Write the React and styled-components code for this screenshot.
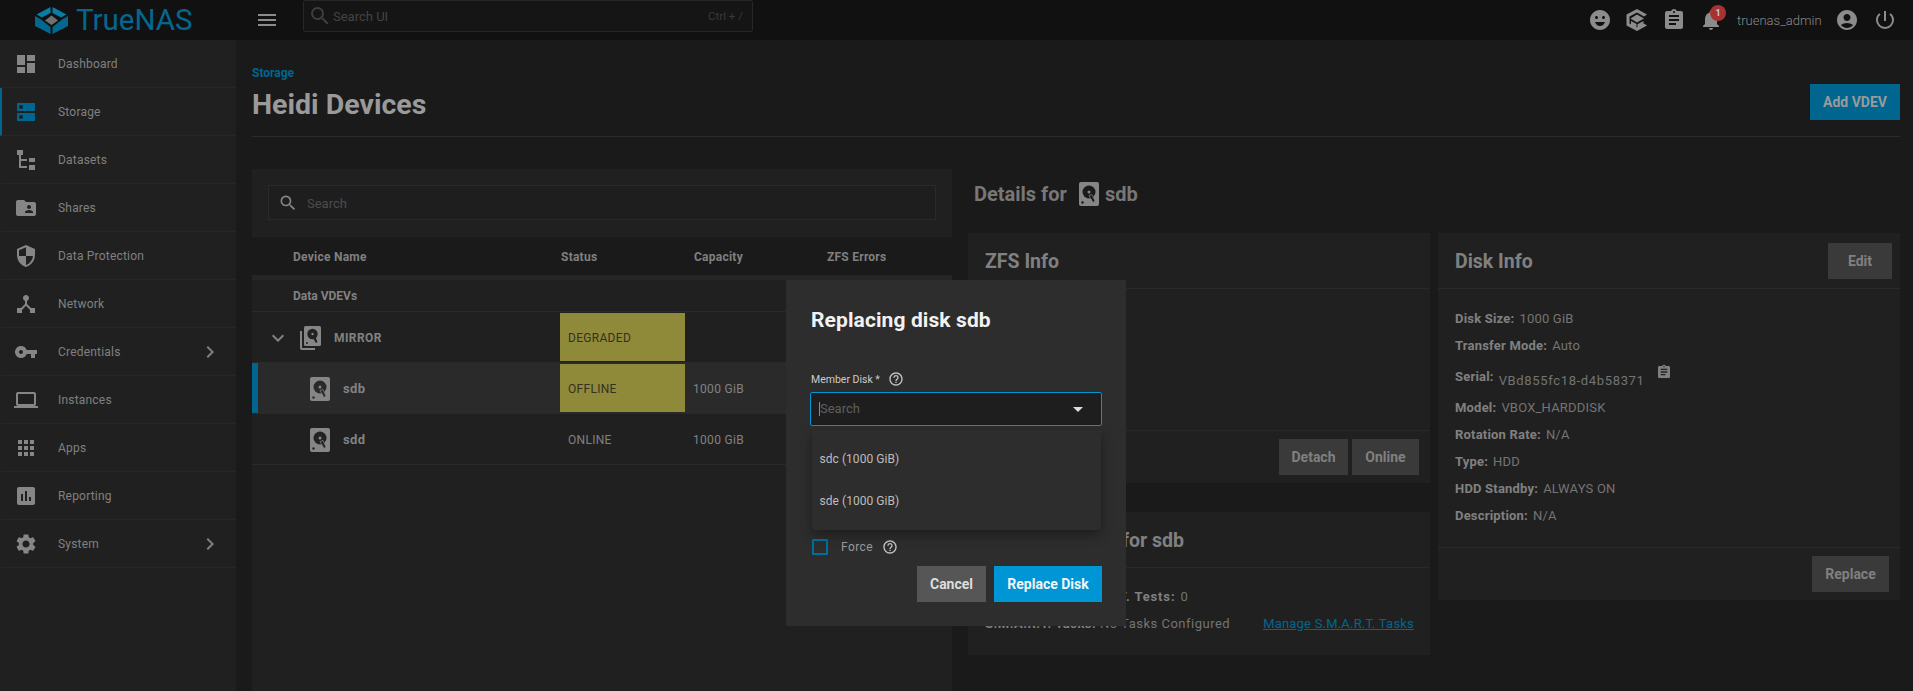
import React from 'react';
import styled, { createGlobalStyle } from 'styled-components';
import {
  MdDashboard, MdDns, MdFolderShared, MdSecurity, MdDeviceHub, MdVpnKey, MdLaptop, MdApps,
  MdAssessment, MdSettings, MdChevronRight, MdExpandMore, MdMenu, MdSearch, MdEmojiEmotions,
  MdAssignment, MdNotifications, MdAccountCircle, MdPowerSettingsNew, MdHelpOutline, MdArrowDropDown,
} from 'react-icons/md';

const GlobalStyle = createGlobalStyle`
  html, body {
    margin: 0;
    height: 100%;
    overflow: hidden;
    background: #1a1a1a;
  }
  * {
    box-sizing: border-box;
  }
`;

const titleFont = '"Roboto", "Liberation Sans", sans-serif';
const textFont = '"Roboto", "Liberation Sans", sans-serif';

const Page = styled.div`
  height: 100vh;
  display: flex;
  flex-direction: column;
  font-family: ${textFont};
  font-size: 12px;
  color: #828282;
`;

/* top bar */
const TopBar = styled.header`
  height: 40px;
  flex: none;
  background: #111111;
  display: flex;
  align-items: center;
  padding-right: 16px;
`;

const Brand = styled.div`
  width: 255px;
  padding-left: 35px;
  display: flex;
  align-items: center;
  gap: 8px;
`;

const BrandName = styled.span`
  font-family: ${titleFont};
  font-size: 29.5px;
  line-height: 32px;
  color: #03688f;
`;

const MenuButton = styled.div`
  width: 24px;
  height: 24px;
  color: #8c8c8c;
  font-size: 24px;
  line-height: 0;
`;

const GlobalSearch = styled.div`
  margin-left: 24px;
  align-self: flex-start;
  width: 450px;
  height: 32px;
  border: 1px solid #262626;
  border-radius: 2px;
  background: #151515;
  display: flex;
  align-items: center;
  padding: 0 9px 0 4px;
  color: #444;
  font-size: 13px;
  gap: 1px;
`;

const Shortcut = styled.span`
  margin-left: auto;
  font-size: 11.5px;
  color: #3a3a3a;
`;

const TopActions = styled.div`
  margin-left: auto;
  display: flex;
  align-items: center;
  color: #8c8c8c;
  font-size: 24px;
`;

const TopIcon = styled.div`
  position: relative;
  width: 24px;
  height: 24px;
  line-height: 0;
  margin-left: ${p => p.$gap}px;
`;

const Badge = styled.span`
  position: absolute;
  top: -3px;
  right: -3px;
  width: 16px;
  height: 16px;
  border-radius: 50%;
  background: #a83232;
  color: #ccc;
  font-size: 9px;
  font-weight: 700;
  line-height: 16px;
  text-align: center;
`;

const UserName = styled.span`
  margin-left: 14px;
  font-size: 13px;
  font-weight: 300;
  color: #8a8a8a;
  width: 90px;
  white-space: nowrap;
`;

const Body = styled.div`
  flex: 1;
  min-height: 0;
  display: flex;
`;

/* sidebar */
const Sidebar = styled.nav`
  width: 236px;
  flex: none;
  background: #202020;
`;

const NavRow = styled.div`
  height: 48px;
  display: flex;
  align-items: center;
  gap: 20px;
  padding: 0 14px 0 12px;
  border-left: 2px solid ${p => (p.$active ? '#006690' : 'transparent')};
  border-bottom: 1px solid #272727;
  color: #808080;
  font-size: 12px;
  letter-spacing: 0.2px;
`;

const NavIcon = styled.span`
  width: 24px;
  height: 24px;
  font-size: 24px;
  line-height: 0;
  color: ${p => (p.$active ? '#006690' : '#868686')};
`;

const NavArrow = styled.span`
  margin-left: auto;
  font-size: 24px;
  height: 24px;
  line-height: 0;
`;

/* main */
const Main = styled.main`
  flex: 1;
  min-width: 0;
  padding: 0 13px 0 16px;
  display: flex;
  flex-direction: column;
`;

const PageHead = styled.div`
  height: 97px;
  flex: none;
  border-bottom: 1px solid #2a2a2a;
  display: flex;
  justify-content: space-between;
  padding-top: 26px;
`;

const Crumb = styled.div`
  font-size: 12px;
  line-height: 14px;
  font-weight: 700;
  color: #006690;
`;

const PageTitle = styled.h1`
  margin: 7px 0 0;
  font-family: ${titleFont};
  font-size: 28.5px;
  line-height: 36px;
  font-weight: 700;
  color: #9a9a9a;
`;

const Button = styled.div`
  height: 36px;
  width: ${p => (p.$width ? `${p.$width}px` : 'auto')};
  padding: 0 ${p => (p.$width ? 0 : 14)}px;
  display: flex;
  align-items: center;
  justify-content: center;
  font-size: 14px;
  font-weight: 700;
  white-space: nowrap;
  background: ${p => p.$bg || '#3a3a3a'};
  color: ${p => p.$color || '#808080'};
`;

const AddButton = styled(Button)`
  margin-top: 18px;
`;

const Columns = styled.div`
  flex: 1;
  min-height: 0;
  margin-top: 32px;
  display: flex;
  gap: 16px;
`;

/* device table */
const TreeCard = styled.section`
  width: 700px;
  flex: none;
  background: #202020;
`;

const TreeSearchWrap = styled.div`
  height: 68px;
  padding: 16px;
`;

const TreeSearch = styled.div`
  height: 35px;
  border: 1px solid #2a2a2a;
  background: #1e1e1e;
  display: flex;
  align-items: center;
  padding: 1px 0 0 9px;
  gap: 9px;
  font-size: 13px;
  color: #4c4c4c;
`;

const SearchGlyph = styled.span`
  font-size: 20px;
  height: 20px;
  line-height: 0;
  color: #868686;
`;

const HeadRow = styled.div`
  height: 43px;
  padding-top: 1px;
  display: grid;
  grid-template-columns: 309px 133px 133px 1fr;
  align-items: center;
  background: #1a1a1a;
  border-bottom: 5px solid #262626;
  font-weight: 700;
  font-size: 12px;
  letter-spacing: 0.25px;
  color: #808080;
`;

const HeadCell = styled.div`
  padding-left: ${p => p.$pad || 0}px;
`;

const GroupRow = styled.div`
  height: 32px;
  padding-left: 41px;
  display: flex;
  align-items: center;
  font-weight: 700;
  border-bottom: 1px solid #292929;
`;

const DeviceRow = styled.div`
  height: 51px;
  display: grid;
  grid-template-columns: 308px 125px 133px 1fr;
  border-bottom: 1px solid #292929;
  background: ${p => (p.$selected ? '#2a2a2a' : 'transparent')};
  box-shadow: ${p => (p.$selected ? 'inset 6px 0 0 #006690' : 'none')};
`;

const NameCell = styled.div`
  display: flex;
  align-items: center;
  padding: 1px 0 0 ${p => p.$pad}px;
  gap: 13px;
  font-weight: 700;
  font-size: ${p => p.$size || 13}px;
  letter-spacing: 0.4px;
`;

const Chevron = styled.span`
  font-size: 24px;
  height: 24px;
  line-height: 0;
  margin-right: -3px;
`;

const StatusCell = styled.div`
  margin: 1px 0;
  padding: 2px 0 0 8px;
  display: flex;
  align-items: center;
  letter-spacing: 0.3px;
  background: ${p => (p.$warn ? '#8f893a' : 'transparent')};
  color: ${p => (p.$warn ? '#33321c' : '#808080')};
`;

const CapacityCell = styled.div`
  padding: 2px 0 0 8px;
  display: flex;
  align-items: center;
  letter-spacing: 0.3px;
`;

/* details */
const DetailColumn = styled.div`
  flex: 1;
  min-width: 0;
`;

const DetailHead = styled.h2`
  height: 64px;
  margin: 0;
  padding: 0 0 14px 6px;
  display: flex;
  align-items: center;
  font-family: ${titleFont};
  font-size: 20px;
  font-weight: 700;
  color: #777;
`;

const DetailDisk = styled.span`
  display: flex;
  margin: 0 6px 0 12px;
`;

const CardGrid = styled.div`
  display: grid;
  grid-template-columns: 462px 462px;
  column-gap: 8px;
  align-items: start;
`;

const CardStack = styled.div`
  display: flex;
  flex-direction: column;
  gap: 29px;
`;

const Card = styled.section`
  background: #202020;
  height: ${p => p.$height}px;
  display: flex;
  flex-direction: column;
`;

const CardHead = styled.div`
  height: 56px;
  flex: none;
  padding: 0 8px 0 17px;
  display: flex;
  align-items: center;
  justify-content: space-between;
  border-bottom: 1px solid #292929;
`;

const CardTitle = styled.h3`
  margin: 1px 0 0;
  font-family: ${titleFont};
  font-size: 19.5px;
  font-weight: 700;
  color: #808080;
`;

const CardBody = styled.div`
  flex: 1;
  padding: ${p => p.$pad || '0 17px'};
`;

const CardFoot = styled.div`
  height: 53px;
  flex: none;
  padding: 0 11px;
  display: flex;
  align-items: center;
  justify-content: flex-end;
  gap: 4px;
  border-top: 1px solid #292929;
`;

const InfoRow = styled.div`
  height: 27px;
  display: flex;
  align-items: center;
  gap: 5px;
  font-size: 13px;
  letter-spacing: ${p => p.$spacing || 0.2}px;
  color: #747474;
`;

const SerialRow = styled(InfoRow)`
  height: 35px;
  align-items: flex-start;
`;

const InfoKey = styled.b`
  color: #808080;
  font-weight: 700;
`;

const SerialValue = styled.span`
  margin-top: 14px;
  letter-spacing: 0.65px;
`;

const SerialKey = styled(InfoKey)`
  margin-top: 10px;
`;

const CopyIcon = styled.span`
  font-size: 16px;
  height: 16px;
  line-height: 0;
  margin: 5px 0 0 6px;
  color: #808080;
`;

const TaskRow = styled(InfoRow)`
  justify-content: space-between;
`;

const TaskLink = styled.a`
  color: #006690;
  text-decoration: underline;
  letter-spacing: 0.2px;
`;

/* dialog */
const Overlay = styled.div`
  position: fixed;
  inset: 0;
  padding-top: 280px;
  display: flex;
  justify-content: center;
  align-items: flex-start;
`;

const Dialog = styled.div`
  width: 340px;
  height: 346px;
  margin-right: 1px;
  padding: 28px 24px 24px;
  background: #2d2d2d;
  color: #ddd;
  display: flex;
  flex-direction: column;
`;

const DialogTitle = styled.h2`
  margin: 0 0 40px 1px;
  font-size: 21px;
  line-height: 24px;
  font-weight: 700;
  letter-spacing: 0.1px;
  color: #f2f2f2;
`;

const FieldLabel = styled.div`
  height: 14px;
  margin-left: 1px;
  display: flex;
  align-items: center;
  gap: 8px;
  font-size: 10.5px;
  color: #ccc;
`;

const HelpIcon = styled(MdHelpOutline)`
  font-size: 16px;
  color: #c4c4c4;
`;

const SelectBox = styled.div`
  position: relative;
  margin-top: 6px;
  height: 34px;
  border: 1px solid #0095d5;
  border-radius: 2px;
  background: #1e1e1e;
  display: flex;
  align-items: center;
  justify-content: space-between;
  padding: 0 11px 0 8px;
  color: #5e5e5e;
  font-size: 13px;
`;

const Caret = styled.span`
  border-left: 1px solid #8a8a8a;
  line-height: 14px;
`;

const DropArrow = styled(MdArrowDropDown)`
  font-size: 24px;
  color: #ddd;
`;

const DropList = styled.div`
  position: absolute;
  top: 37px;
  left: 0;
  right: 0;
  padding: 8px 0;
  margin: 0 0.5px;
  border-radius: 0 0 4px 4px;
  background: #2d2d2d;
  box-shadow: 0 5px 12px rgba(0, 0, 0, 0.35);
`;

const DropItem = styled.div`
  height: 42px;
  padding-left: 8px;
  display: flex;
  align-items: center;
  font-size: 12px;
  letter-spacing: 0.05px;
  color: #bdbdbd;
`;

const CheckRow = styled.div`
  margin: 112px 0 0 2px;
  height: 16px;
  padding-top: 1px;
  display: flex;
  align-items: center;
  font-size: 12px;
  letter-spacing: 0.4px;
  color: #9a9a9a;
`;

const CheckBox = styled.span`
  width: 16px;
  height: 16px;
  margin-right: 13px;
  border: 2px solid #006f9e;
  border-radius: 1px;
`;

const ForceHelp = styled(HelpIcon)`
  margin-left: 9px;
`;

const DialogActions = styled.div`
  margin-top: 12px;
  display: flex;
  justify-content: flex-end;
  gap: 8px;
`;

const navItems = [
  { label: 'Dashboard', icon: <MdDashboard /> },
  { label: 'Storage', icon: <MdDns />, active: true },
  { label: 'Datasets', icon: <DatasetsIcon /> },
  { label: 'Shares', icon: <MdFolderShared /> },
  { label: 'Data Protection', icon: <MdSecurity /> },
  { label: 'Network', icon: <MdDeviceHub /> },
  { label: 'Credentials', icon: <MdVpnKey />, more: true },
  { label: 'Instances', icon: <MdLaptop /> },
  { label: 'Apps', icon: <MdApps /> },
  { label: 'Reporting', icon: <MdAssessment /> },
  { label: 'System', icon: <MdSettings />, more: true },
];

const diskInfo = [
  ['Disk Size:', '1000 GiB'],
  ['Transfer Mode:', 'Auto'],
  ['Serial:', 'VBd855fc18-d4b58371'],
  ['Model:', 'VBOX_HARDDISK'],
  ['Rotation Rate:', 'N/A'],
  ['Type:', 'HDD'],
  ['HDD Standby:', 'ALWAYS ON'],
  ['Description:', 'N/A'],
];

function DatasetsIcon() {
  return (
    <svg width="24" height="24" viewBox="0 0 24 24" fill="currentColor">
      <rect x="3" y="2" width="6" height="5" />
      <rect x="5" y="7" width="2" height="13" />
      <rect x="5" y="11" width="8" height="2" />
      <rect x="5" y="18" width="8" height="2" />
      <rect x="15" y="10" width="6" height="4" />
      <rect x="15" y="17" width="6" height="5" />
    </svg>
  );
}

function LogoMark() {
  return (
    <svg width="33" height="27" viewBox="0 0 33 27">
      <polygon points="15.5,0 15.5,6 7,10.5 1.5,7.5" fill="#0a7da6" />
      <polygon points="17.5,0 17.5,6 26,10.5 31.5,7.5" fill="#0a7da6" />
      <polygon points="0,9 6,12.5 15.5,20 15.5,27 0,19" fill="#03688f" />
      <polygon points="33,9 27,12.5 17.5,20 17.5,27 33,19" fill="#03688f" />
      <polygon points="16.5,8.5 23,13.5 16.5,18 10,13.5" fill="#707070" />
    </svg>
  );
}

function CubeLogo() {
  return (
    <svg width="24" height="24" viewBox="0 0 24 24" fill="currentColor">
      <path d="M12 1 22 6.5 19 8.5 12 4.5 4.5 8.5V15.5L12 19.5 19 15.5 22 17.5 12 23 1.5 17.5V6.5Z" />
      <path d="M12 6.5 19 10.5 12 14.5 5.5 10.5Z" />
      <path d="M6 13 11.5 16V20L6 17ZM18.5 13 12.5 16.3V20L18.5 16.8Z" />
    </svg>
  );
}

function DiskIcon({ ground = '#222' }) {
  return (
    <svg width="20" height="24" viewBox="0 0 20 24" style={{ flex: 'none' }}>
      <rect x="0" y="0" width="20" height="24" rx="2" fill="#868686" />
      <circle cx="10" cy="10" r="6.5" fill={ground} />
      <circle cx="10" cy="10" r="1.5" fill="#868686" />
      <path d="M10 13.5 13 12.5 16 19 14 20.5Z" fill={ground} stroke="#868686" strokeWidth="0.7" />
      <circle cx="3.5" cy="20.5" r="1.2" fill={ground} />
    </svg>
  );
}

function MirrorIcon() {
  return (
    <svg width="21" height="24" viewBox="0 0 21 24" style={{ flex: 'none' }}>
      <path d="M0 5H2V22H15V24H2Q0 24 0 22Z" fill="#868686" />
      <rect x="4" y="0" width="17" height="20" rx="1.5" fill="#868686" />
      <circle cx="12.5" cy="8" r="5.2" fill="#222" />
      <circle cx="12.5" cy="8" r="1.2" fill="#868686" />
      <path d="M12.5 11 15 10 17.5 16 15.8 17Z" fill="#222" />
      <circle cx="7" cy="17" r="1" fill="#222" />
    </svg>
  );
}

export default function App() {
  return (
    <Page>
      <GlobalStyle />
      <TopBar>
        <Brand>
          <LogoMark />
          <BrandName>TrueNAS</BrandName>
        </Brand>
        <MenuButton><MdMenu /></MenuButton>
        <GlobalSearch>
          <MdSearch size={24} color="#3e3e3e" />
          Search UI
          <Shortcut>Ctrl + /</Shortcut>
        </GlobalSearch>
        <TopActions>
          <TopIcon $gap={0}><MdEmojiEmotions /></TopIcon>
          <TopIcon $gap={13}><CubeLogo /></TopIcon>
          <TopIcon $gap={13}><MdAssignment /></TopIcon>
          <TopIcon $gap={13}>
            <MdNotifications />
            <Badge>1</Badge>
          </TopIcon>
          <UserName>truenas_admin</UserName>
          <TopIcon $gap={8}><MdAccountCircle /></TopIcon>
          <TopIcon $gap={14}><MdPowerSettingsNew /></TopIcon>
        </TopActions>
      </TopBar>
      <Body>
        <Sidebar>
          {navItems.map(item => (
            <NavRow key={item.label} $active={item.active}>
              <NavIcon $active={item.active}>{item.icon}</NavIcon>
              {item.label}
              {item.more && <NavArrow><MdChevronRight /></NavArrow>}
            </NavRow>
          ))}
        </Sidebar>
        <Main>
          <PageHead>
            <div>
              <Crumb>Storage</Crumb>
              <PageTitle>Heidi Devices</PageTitle>
            </div>
            <AddButton $width={90} $bg="#006690" $color="#9a9a9a">Add VDEV</AddButton>
          </PageHead>
          <Columns>
            <TreeCard>
              <TreeSearchWrap>
                <TreeSearch>
                  <SearchGlyph><MdSearch /></SearchGlyph>
                  Search
                </TreeSearch>
              </TreeSearchWrap>
              <HeadRow>
                <HeadCell $pad={41}>Device Name</HeadCell>
                <HeadCell>Status</HeadCell>
                <HeadCell>Capacity</HeadCell>
                <HeadCell>ZFS Errors</HeadCell>
              </HeadRow>
              <GroupRow>Data VDEVs</GroupRow>
              <DeviceRow>
                <NameCell $pad={14} $size={12}>
                  <Chevron><MdExpandMore /></Chevron>
                  <MirrorIcon />
                  MIRROR
                </NameCell>
                <StatusCell $warn>DEGRADED</StatusCell>
                <CapacityCell />
              </DeviceRow>
              <DeviceRow $selected>
                <NameCell $pad={58}>
                  <DiskIcon ground="#2a2a2a" />
                  sdb
                </NameCell>
                <StatusCell $warn>OFFLINE</StatusCell>
                <CapacityCell>1000 GiB</CapacityCell>
              </DeviceRow>
              <DeviceRow>
                <NameCell $pad={58}>
                  <DiskIcon />
                  sdd
                </NameCell>
                <StatusCell>ONLINE</StatusCell>
                <CapacityCell>1000 GiB</CapacityCell>
              </DeviceRow>
            </TreeCard>
            <DetailColumn>
              <DetailHead>
                Details for
                <DetailDisk><DiskIcon ground="#1a1a1a" /></DetailDisk>
                sdb
              </DetailHead>
              <CardGrid>
                <CardStack>
                  <Card $height={250}>
                    <CardHead><CardTitle>ZFS Info</CardTitle></CardHead>
                    <CardBody />
                    <CardFoot>
                      <Button $width={69}>Detach</Button>
                      <Button $width={67}>Online</Button>
                    </CardFoot>
                  </Card>
                  <Card $height={143}>
                    <CardHead><CardTitle>S.M.A.R.T. Info for sdb</CardTitle></CardHead>
                    <CardBody $pad="15px 16px 0 17px">
                      <InfoRow $spacing={0.85}><InfoKey>Completed S.M.A.R.T. Tests:</InfoKey> 0</InfoRow>
                      <TaskRow $spacing={0.5}>
                        <span><InfoKey>S.M.A.R.T. Tasks:</InfoKey> No Tasks Configured</span>
                        <TaskLink>Manage S.M.A.R.T. Tasks</TaskLink>
                      </TaskRow>
                    </CardBody>
                  </Card>
                </CardStack>
                <Card $height={367}>
                  <CardHead>
                    <CardTitle>Disk Info</CardTitle>
                    <Button $width={64}>Edit</Button>
                  </CardHead>
                  <CardBody $pad="16px 17px 0">
                    {diskInfo.map(([key, value]) =>
                      key === 'Serial:' ? (
                        <SerialRow key={key}>
                          <SerialKey>{key}</SerialKey>
                          <SerialValue>{value}</SerialValue>
                          <CopyIcon><MdAssignment /></CopyIcon>
                        </SerialRow>
                      ) : (
                        <InfoRow key={key}><InfoKey>{key}</InfoKey> {value}</InfoRow>
                      )
                    )}
                  </CardBody>
                  <CardFoot>
                    <Button $width={77}>Replace</Button>
                  </CardFoot>
                </Card>
              </CardGrid>
            </DetailColumn>
          </Columns>
        </Main>
      </Body>
      <Overlay>
        <Dialog>
          <DialogTitle>Replacing disk sdb</DialogTitle>
          <FieldLabel>
            Member Disk *
            <HelpIcon />
          </FieldLabel>
          <SelectBox>
            <Caret>Search</Caret>
            <DropArrow />
            <DropList>
              <DropItem>sdc (1000 GiB)</DropItem>
              <DropItem>sde (1000 GiB)</DropItem>
            </DropList>
          </SelectBox>
          <CheckRow>
            <CheckBox />
            Force
            <ForceHelp />
          </CheckRow>
          <DialogActions>
            <Button $width={69} $bg="#565656" $color="#ddd">Cancel</Button>
            <Button $width={108} $bg="#0095d5" $color="#f4f4f4">Replace Disk</Button>
          </DialogActions>
        </Dialog>
      </Overlay>
    </Page>
  );
}
